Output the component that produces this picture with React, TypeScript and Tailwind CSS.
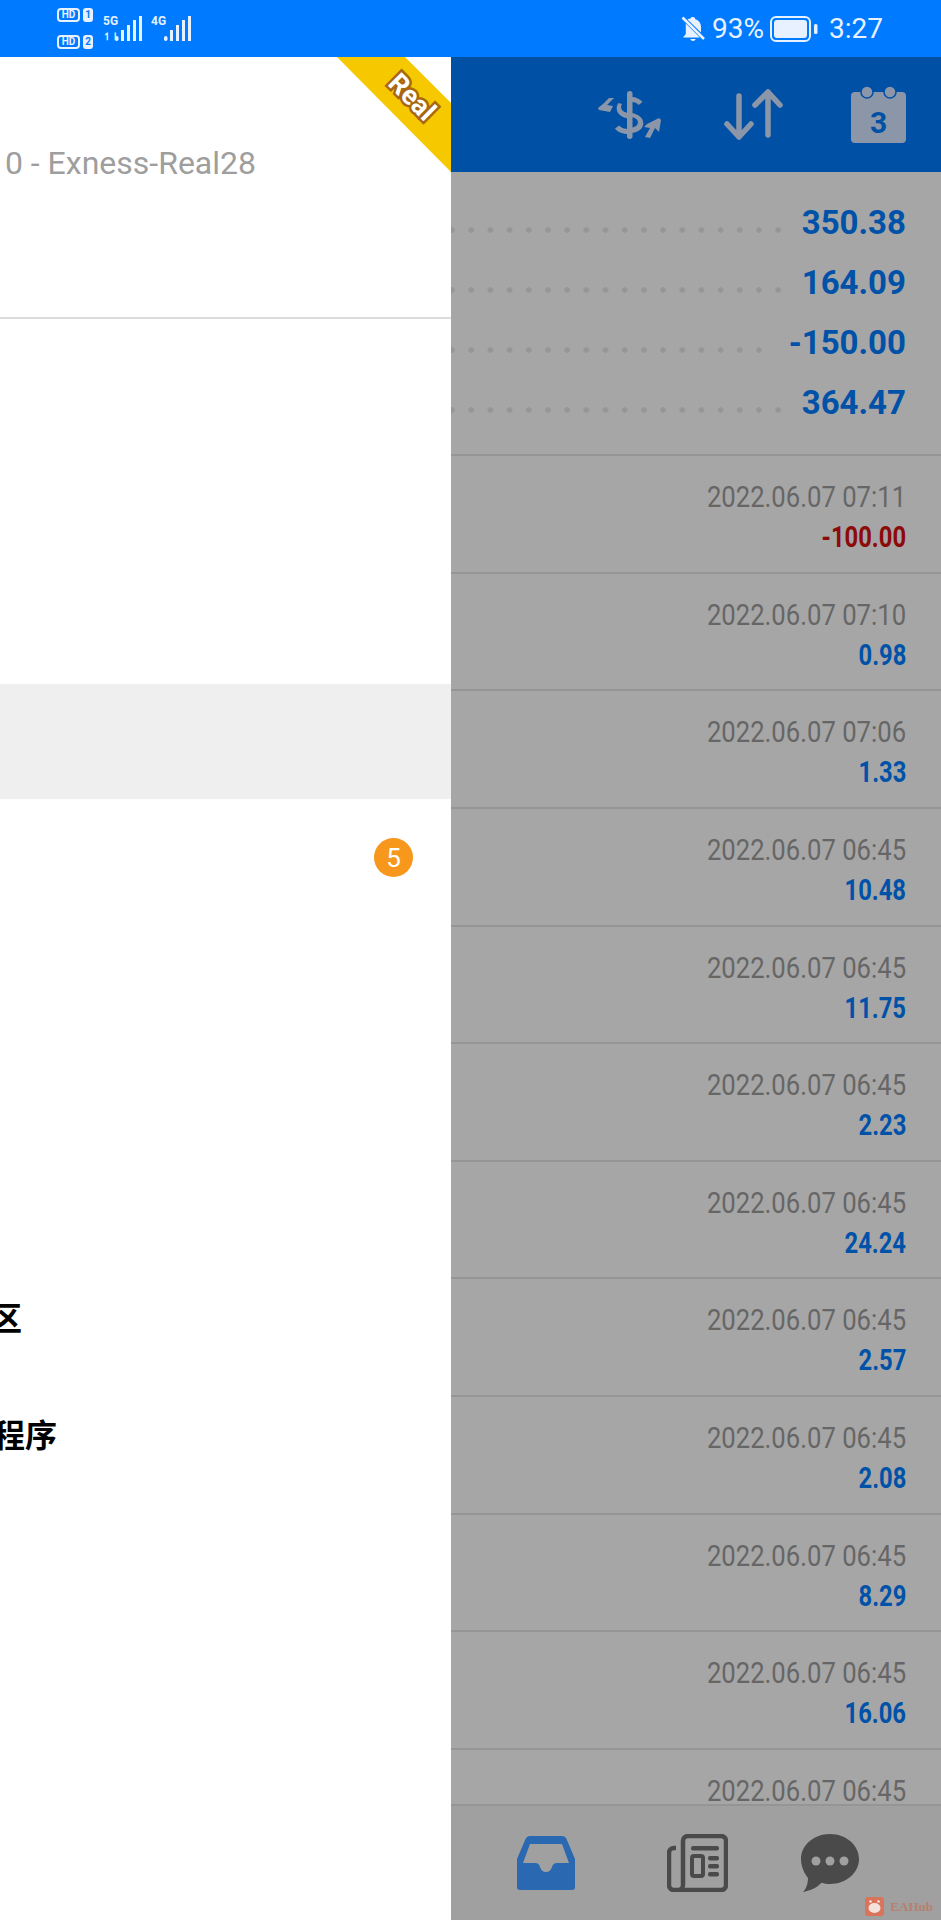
const rows: [string, string, boolean?][] = [
  ["2022.06.07 07:11", "-100.00", true],
  ["2022.06.07 07:10", "0.98"],
  ["2022.06.07 07:06", "1.33"],
  ["2022.06.07 06:45", "10.48"],
  ["2022.06.07 06:45", "11.75"],
  ["2022.06.07 06:45", "2.23"],
  ["2022.06.07 06:45", "24.24"],
  ["2022.06.07 06:45", "2.57"],
  ["2022.06.07 06:45", "2.08"],
  ["2022.06.07 06:45", "8.29"],
  ["2022.06.07 06:45", "16.06"],
  ["2022.06.07 06:45", ""],
];
const totals = ["350.38", "164.09", "-150.00", "364.47"];

function Sim({ n }: { n: string }) {
  return (
    <div className="flex items-center gap-[3px]">
      <span className="flex h-[14px] w-[23px] items-center justify-center rounded-[4px] border-2 border-[#e8f1ff] text-[10px] leading-none font-bold text-[#e8f1ff]">HD</span>
      <span className="flex h-[14px] w-[10px] items-center justify-center rounded-[3px] bg-[#e8f1ff] text-[10px] leading-none font-bold text-[#007aff]">{n}</span>
    </div>
  );
}

function Bars({ x = 0 }: { x?: number }) {
  return (
    <svg width="28" height="26" viewBox="0 0 28 26" fill="#e8f1ff">
      <rect x={x} y="20" width="3.5" height="5" rx="1.7" />
      <rect x={x + 6} y="14" width="3" height="11" />
      <rect x={x + 12} y="9" width="3" height="16" />
      <rect x={x + 18} y="4" width="3" height="21" />
      <rect x={x + 24 > 25 ? 25 : x + 24} y="0" width="3" height="25" />
    </svg>
  );
}

function Ribbon() {
  return (
    <div className="absolute top-0 right-0 h-[115px] w-[114px] overflow-hidden bg-[#f6c800] [clip-path:polygon(0_0,68px_0,114px_46px,114px_115px)]">
      <span className="absolute top-[18px] left-[37px] flex h-[44px] w-[76px] rotate-45 items-center justify-center text-[27px] font-bold text-white [-webkit-text-stroke:5px_#a8660f] [paint-order:stroke_fill]">
        Real
      </span>
    </div>
  );
}

export default function App() {
  return (
    <div className="flex h-[1920px] w-[941px] flex-col overflow-hidden bg-white font-['Roboto','Noto_Sans_CJK_SC',sans-serif]">
      <div className="flex h-[57px] shrink-0 items-center justify-between bg-[#007aff] pr-[58px] pl-[57px] text-[#e8f1ff]">
        <div className="flex items-center gap-[10px]">
          <div className="flex flex-col gap-[13px]">
            <Sim n="1" />
            <Sim n="2" />
          </div>
          <div className="flex items-center gap-[9px]">
            <div className="relative h-[26px] w-[39px]">
              <span className="absolute top-[-2px] left-0 text-[12px] leading-[14px] font-bold">5G</span>
              <span className="absolute bottom-0 left-0 text-[10px] leading-[11px] font-bold">↿⇂</span>
              <div className="absolute top-0 left-[12px]"><Bars /></div>
            </div>
            <div className="relative h-[26px] w-[40px]">
              <span className="absolute top-[-2px] left-0 text-[12px] leading-[14px] font-bold">4G</span>
              <div className="absolute top-0 left-[13px]"><Bars /></div>
            </div>
          </div>
        </div>
        <div className="flex items-center">
          <svg width="26" height="26" viewBox="0 0 26 26" fill="#e8f1ff" className="mr-[6px]">
            <path d="M13 1c1.300 0 2.300 1 2.300 2.200 3.600 1 5.700 4 5.700 7.800v5.500l-13.500-13C8.800 3 10.200 2.400 10.700 2.300 10.900 1.500 11.800 1 13 1zM5.800 7.500 19.800 21.500H3l2.800-3.500V10c0-.9 0-1.700 0-2.500zM10.300 23h5.400c-.3 1.300-1.400 2-2.700 2s-2.400-.7-2.700-2z" />
            <path d="M2.500 1.500 24 23" stroke="#e8f1ff" strokeWidth="2.500" />
          </svg>
          <span className="text-[28px] leading-none">93%</span>
          <svg width="50" height="28" viewBox="0 0 50 28" className="mr-[9px] ml-[6px]">
            <rect x="1" y="2" width="39" height="24" rx="5" fill="none" stroke="#e8f1ff" strokeWidth="2" />
            <rect x="4" y="5" width="33" height="18" rx="3" fill="#e8f1ff" />
            <rect x="44" y="9" width="3.500" height="10" rx="1.500" fill="#e8f1ff" />
          </svg>
          <span className="text-[28px] leading-none">3:27</span>
        </div>
      </div>

      <div className="flex min-h-0 flex-1">
        <div className="flex w-[451px] shrink-0 flex-col bg-white">
          <div className="relative flex h-[262px] shrink-0 justify-end border-b-2 border-[#dcdcdc] pt-[84px] pr-[195px]">
            <Ribbon />
            <span className="text-[32px] leading-[44px] whitespace-nowrap text-[#9e9e9e]">0 - Exness-Real28</span>
          </div>
          <div className="mt-[365px] h-[115px] shrink-0 bg-[#efefef]" />
          <div className="flex h-[117px] shrink-0 items-center justify-end pr-[38px]">
            <span className="flex size-[39px] items-center justify-center rounded-full bg-[#f7981d] text-[26px] leading-none text-white">5</span>
          </div>
          <div className="mt-[344px] flex h-[117px] shrink-0 items-center justify-end pr-[429px]">
            <span className="text-[32px] font-bold whitespace-nowrap text-black">社区</span>
          </div>
          <div className="flex h-[117px] shrink-0 items-center justify-end pr-[394px]">
            <span className="text-[32px] font-bold whitespace-nowrap text-black">应用程序</span>
          </div>
        </div>

        <div className="flex min-w-0 flex-1 flex-col bg-[#a6a6a6]">
          <div className="flex h-[115px] shrink-0 items-center justify-end bg-[#0050a6] pr-[35px]">
            <svg width="63" height="48" viewBox="0 0 63 48" fill="#8b97a8" className="mr-[63px]">
              <rect x="29" y="0" width="5.500" height="48" rx="2.700" />
              <path d="M34 6c4 0 8 2 10.500 5l-4 3c-1.500-1.800-3.500-2.900-6.500-3zM24 13c-1 1.500-1.300 3.500-.4 5.200.9 1.800 3 2.800 5.400 3.500v5.500c-4-1-7.500-2.800-9.300-5.800-1.700-3-1.200-7 .8-9.400zM34 22c4 .9 7 2.300 9 4.500 3 3.500 3 8.300 0 11.500-2.300 2.400-5.600 3.700-9 4v-5.500c2.200-.3 4-1.200 5-2.500 1.300-1.800 1.200-4-.1-5.400-1.200-1.300-3-2-4.900-2.600zM29 43c-5 0-9.500-2.300-12-5.500l4.200-3c1.500 2 4.500 3.200 7.800 3.500z" />
              <path d="M16 7 9 14 15 15 12 21 1 19 0 17 5 13 11 7zM47 46 52 37 46 36 49 33 61 27 63 29 61 41 57 37 52 47z" />
            </svg>
            <svg width="59" height="52" viewBox="0 0 59 52" fill="none" stroke="#8b97a8" strokeWidth="5.500" strokeLinecap="round" strokeLinejoin="round" className="mr-[68px]">
              <path d="M15 7v41M3 35l12 13 12-13M44 46V3M31 16 44 3l12 13" />
            </svg>
            <svg width="55" height="57" viewBox="0 0 55 57">
              <path d="M4 6h47a4 4 0 0 1 4 4v43a4 4 0 0 1-4 4H4a4 4 0 0 1-4-4V10a4 4 0 0 1 4-4z" fill="#8b97a8" />
              <circle cx="16" cy="6" r="6" fill="#8b97a8" stroke="#0050a6" strokeWidth="1.500" />
              <circle cx="39" cy="6" r="6" fill="#8b97a8" stroke="#0050a6" strokeWidth="1.500" />
              <text x="27.500" y="47" textAnchor="middle" fontSize="30" fontWeight="700" fill="#0050a6" fontFamily="Roboto">3</text>
            </svg>
          </div>

          <div className="flex h-[284px] shrink-0 flex-col border-b-2 border-[#959595] pt-[21px]">
            {totals.map((t) => (
              <div key={t} className="flex h-[60px] shrink-0 pr-[35px]">
                <div className="mr-[16px] min-w-0 flex-1 bg-[radial-gradient(circle,#969696_2.5px,transparent_3px)] bg-[length:19.2px_6px] bg-[position:-8.6px_34px] bg-repeat-x" />
                <span className="text-[33px] leading-[60px] font-bold text-[#0052a8]">{t}</span>
              </div>
            ))}
          </div>

          <div className="min-h-0 flex-1 overflow-hidden">
            {rows.map(([date, amt, neg], i) => (
              <div key={i} className="flex h-[117.65px] flex-col items-end border-b-2 border-[#959595] pt-[21px] pr-[35px]">
                <span className="origin-right scale-x-[0.885] text-[29px] leading-[40px] whitespace-nowrap text-[#666666]">{date}</span>
                <span className={`origin-right scale-x-[0.82] text-[29px] leading-[40px] font-bold whitespace-nowrap ${neg ? "text-[#8c0a0a]" : "text-[#0052a8]"}`}>{amt}</span>
              </div>
            ))}
          </div>

          <div className="relative flex h-[116px] shrink-0 items-center border-t-2 border-[#959595] bg-[#a0a0a0] pl-[66px]">
            <svg width="58" height="54" viewBox="0 0 58 54" fill="#2a68b2" className="mr-[92px]">
              <path fillRule="evenodd" d="M13 0h32c2 0 3.500 1 4.500 3L58 23v28a3 3 0 0 1-3 3H3a3 3 0 0 1-3-3V23L8.500 3C9.500 1 11 0 13 0zM13 8 6 27h12c3 0 4 1 5 4 1 3 3 5 6 5s5-2 6-5c1-3 2-4 5-4h12L45 8z" />
            </svg>
            <svg width="61" height="58" viewBox="0 0 61 58" className="mr-[73px]">
              <path d="M9 14H7a5 5 0 0 0-5 5v32a5 5 0 0 0 5 5h47a5 5 0 0 0 5-5V7a5 5 0 0 0-5-5H21a5 5 0 0 0-5 5v44a5 5 0 0 1-5 5" fill="none" stroke="#4a4a4a" strokeWidth="4.500" />
              <rect x="24" y="12" width="28" height="4.500" rx="2" fill="#4a4a4a" />
              <rect x="25" y="22" width="11" height="20" rx="2" fill="none" stroke="#4a4a4a" strokeWidth="4" />
              <rect x="41" y="22" width="11" height="4.500" rx="2" fill="#4a4a4a" />
              <rect x="41" y="30" width="11" height="4.500" rx="2" fill="#4a4a4a" />
              <rect x="41" y="38" width="11" height="4.500" rx="2" fill="#4a4a4a" />
            </svg>
            <svg width="58" height="58" viewBox="0 0 58 58">
              <path d="M29 0c16 0 29 11 29 25S45 50 29 50c-3 0-6-.4-8.500-1.200C16 54 8 57 2 58c3-3 5-8 5-14C3 39 0 32 0 25 0 11 13 0 29 0z" fill="#4a4a4a" />
              <circle cx="15" cy="27" r="4.500" fill="#a0a0a0" />
              <circle cx="29" cy="27" r="4.500" fill="#a0a0a0" />
              <circle cx="43" cy="27" r="4.500" fill="#a0a0a0" />
            </svg>
            <div className="absolute right-[8px] bottom-[4px] flex items-center gap-[6px]">
              <span className="flex size-[19px] items-center justify-center rounded-[3px] bg-[#d9735a]">
                <svg width="15" height="15" viewBox="0 0 15 15" fill="#f3e3dc">
                  <ellipse cx="7.500" cy="9" rx="6" ry="5" />
                  <circle cx="3.500" cy="2.500" r="1.300" />
                  <circle cx="11.500" cy="2.500" r="1.300" />
                </svg>
              </span>
              <span className="font-['Liberation_Serif',serif] text-[13px] leading-none font-bold text-[#b5806f]">EAHub</span>
            </div>
          </div>
        </div>
      </div>
    </div>
  );
}
